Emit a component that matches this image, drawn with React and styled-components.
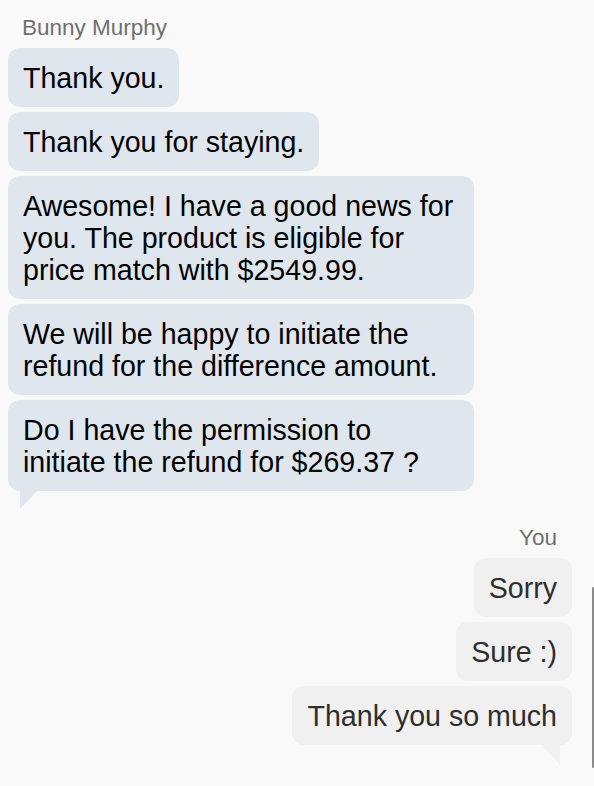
import React from 'react';
import styled, { createGlobalStyle } from 'styled-components';

const GlobalStyle = createGlobalStyle`
  html, body {
    margin: 0;
    padding: 0;
    background: #f9f9f9;
  }
  body {
    font-family: "Liberation Sans", Arial, Helvetica, sans-serif;
  }
`;

const Chat = styled.div`
  padding: 15px 22px 40px 8px;
  display: flex;
  flex-direction: column;
  gap: 34px;
`;

const Group = styled.div`
  display: flex;
  flex-direction: column;
  align-items: ${p => (p.$mine ? 'flex-end' : 'flex-start')};
  gap: 5px;
`;

const Sender = styled.div`
  font-size: 22.5px;
  line-height: 26px;
  color: #707070;
  margin-bottom: 2px;
  padding: ${p => (p.$mine ? '0 15px 0 0' : '0 0 0 14px')};
`;

const Bubble = styled.div`
  position: relative;
  box-sizing: border-box;
  max-width: 466px;
  padding: 13.5px 15px;
  border-radius: 12px;
  font-size: 28.6px;
  line-height: 32px;
  background: ${p => (p.$mine ? '#f0f0f0' : '#e0e6ee')};
  color: ${p => (p.$mine ? '#2e2e2e' : '#000')};

  ${p => p.$tail && !p.$mine && `
    &::after {
      content: '';
      position: absolute;
      top: 100%;
      left: 12px;
      width: 0;
      height: 0;
      border-top: 18px solid #e0e6ee;
      border-right: 17px solid transparent;
    }
  `}

  ${p => p.$tail && p.$mine && `
    &::after {
      content: '';
      position: absolute;
      top: 100%;
      right: 12px;
      width: 0;
      height: 0;
      border-top: 20px solid #f0f0f0;
      border-left: 18px solid transparent;
    }
  `}
`;

const ScrollThumb = styled.div`
  position: fixed;
  top: 587px;
  right: 0;
  width: 2px;
  height: 181px;
  border-radius: 1px;
  background: #8c8c8c;
`;

const conversation = [
  {
    sender: 'Bunny Murphy',
    mine: false,
    messages: [
      'Thank you.',
      'Thank you for staying.',
      'Awesome! I have a good news for you. The product is eligible for price match with $2549.99.',
      'We will be happy to initiate the refund for the difference amount.',
      'Do I have the permission to initiate the refund for $269.37 ?'
    ]
  },
  {
    sender: 'You',
    mine: true,
    messages: ['Sorry', 'Sure :)', 'Thank you so much']
  }
];

const App = () => {
  return (
    <>
      <GlobalStyle />
      <Chat>
        {conversation.map(group => (
          <Group key={group.sender} $mine={group.mine}>
            <Sender $mine={group.mine}>{group.sender}</Sender>
            {group.messages.map((text, i) => (
              <Bubble
                key={i}
                $mine={group.mine}
                $tail={i === group.messages.length - 1}
              >
                {text}
              </Bubble>
            ))}
          </Group>
        ))}
      </Chat>
      <ScrollThumb />
    </>
  );
};

export default App;
